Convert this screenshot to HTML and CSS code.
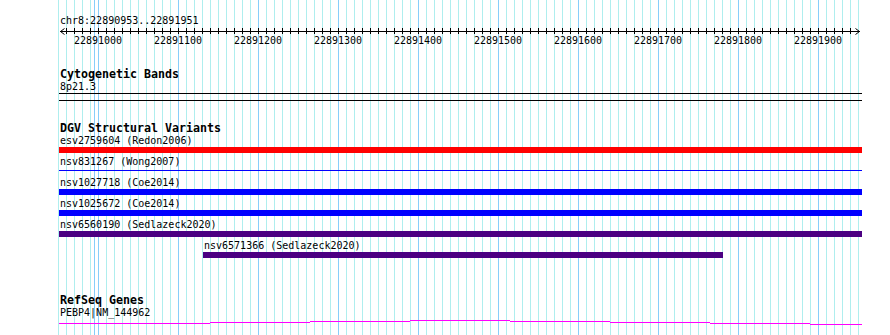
FILE: index.html
```html
<!DOCTYPE html>
<html lang="en">
<head>
    <meta charset="UTF-8">
    <meta name="viewport" content="width=device-width, initial-scale=1.0">
    <title>chr8:22890953..22891951</title>
    <link rel="stylesheet" href="styles.css">
</head>
<body>
    <div class="panel">
        <!-- Règle de position -->
        <div class="ruler">
            <div class="ref">chr8:22890953..22891951</div>
            <svg class="axis" width="804" height="8" viewBox="0 0 804 8">
                <defs>
                    <pattern id="tick" patternUnits="userSpaceOnUse" width="8" height="8">
                        <rect x="0" y="1" width="1" height="6" fill="#000"></rect>
                    </pattern>
                </defs>
                <rect x="2" y="4" width="800" height="1" fill="#000"></rect>
                <rect x="8" y="0" width="785" height="8" fill="url(#tick)"></rect>
                <path d="M2.5 4.5 L6.5 1.5 M2.5 4.5 L6.5 7.5 M801.5 4.5 L797.5 1.5 M801.5 4.5 L797.5 7.5" stroke="#000" stroke-width="1" fill="none"></path>
            </svg>
            <div class="ticks">
                <span>22891000</span>
                <span>22891100</span>
                <span>22891200</span>
                <span>22891300</span>
                <span>22891400</span>
                <span>22891500</span>
                <span>22891600</span>
                <span>22891700</span>
                <span>22891800</span>
                <span>22891900</span>
            </div>
        </div>

        <div class="track cyto">
            <div class="track-title">Cytogenetic Bands</div>
            <div class="label">8p21.3</div>
            <div class="band"></div>
        </div>

        <div class="track dgv">
            <div class="track-title">DGV Structural Variants</div>
            <div class="features">
                <div class="feature">
                    <div class="label">esv2759604 (Redon2006)</div>
                    <div class="bar red"></div>
                </div>
                <div class="feature">
                    <div class="label">nsv831267 (Wong2007)</div>
                    <div class="bar thin"></div>
                </div>
                <div class="feature">
                    <div class="label">nsv1027718 (Coe2014)</div>
                    <div class="bar blue"></div>
                </div>
                <div class="feature">
                    <div class="label">nsv1025672 (Coe2014)</div>
                    <div class="bar blue"></div>
                </div>
                <div class="feature">
                    <div class="label">nsv6560190 (Sedlazeck2020)</div>
                    <div class="bar purple"></div>
                </div>
                <div class="feature" style="margin-left: 144px;">
                    <div class="label">nsv6571366 (Sedlazeck2020)</div>
                    <div class="bar purple" style="width: 520px;"></div>
                </div>
            </div>
        </div>

        <div class="track genes">
            <div class="track-title">RefSeq Genes</div>
            <div class="label">PEBP4|NM_144962</div>
            <svg class="gene" width="804" height="6" viewBox="0 0 804 6">
                <g fill="#ff00ff">
                    <rect x="1" y="4" width="151" height="1"></rect>
                    <rect x="152" y="3" width="100" height="1"></rect>
                    <rect x="252" y="2" width="100" height="1"></rect>
                    <rect x="352" y="1" width="100" height="1"></rect>
                    <rect x="452" y="2" width="100" height="1"></rect>
                    <rect x="552" y="3" width="100" height="1"></rect>
                    <rect x="652" y="4" width="100" height="1"></rect>
                    <rect x="752" y="5" width="52" height="1"></rect>
                </g>
            </svg>
        </div>
    </div>
</body>
</html>
```

FILE: styles.css
```css
body {
    margin: 0;
    background: #fff;
    font-family: "DejaVu Sans Mono", "Liberation Mono", monospace;
    font-size: 10px;
    color: #000;
}
.panel {
    margin-left: 58px;
    width: 804px;
    min-height: 335px;
    padding-top: 15px;
    box-sizing: border-box;
    background-image:
        repeating-linear-gradient(to right, #87cefa 0 1px, transparent 1px 80px),
        repeating-linear-gradient(to right, #afeeee 0 1px, transparent 1px 8px);
    background-position: 40px 0, 0 0;
}
.ref, .label {
    line-height: 12px;
    padding-left: 2px;
    white-space: nowrap;
}
.axis, .gene {
    display: block;
}
.ticks {
    display: flex;
    line-height: 12px;
}
.ticks span {
    width: 80px;
    text-align: center;
}
.track-title {
    font-weight: bold;
    font-size: 11.63px;
    line-height: 13px;
    padding-left: 2px;
}
.cyto {
    margin-top: 21px;
}
.band {
    margin-left: 1px;
    height: 6px;
    border-top: 1px solid #000;
    border-bottom: 1px solid #000;
}
.dgv {
    margin-top: 21px;
}
.feature {
    margin-bottom: 3px;
}
.bar {
    margin-left: 1px;
    height: 6px;
}
.bar.red {
    background: #ff0000;
}
.bar.blue {
    background: #0000ff;
}
.bar.purple {
    background: #4b0082;
}
.bar.thin {
    background: linear-gradient(to bottom, transparent 2px, #0000ff 2px 3px, transparent 3px);
}
.genes {
    margin-top: 36px;
}
```
